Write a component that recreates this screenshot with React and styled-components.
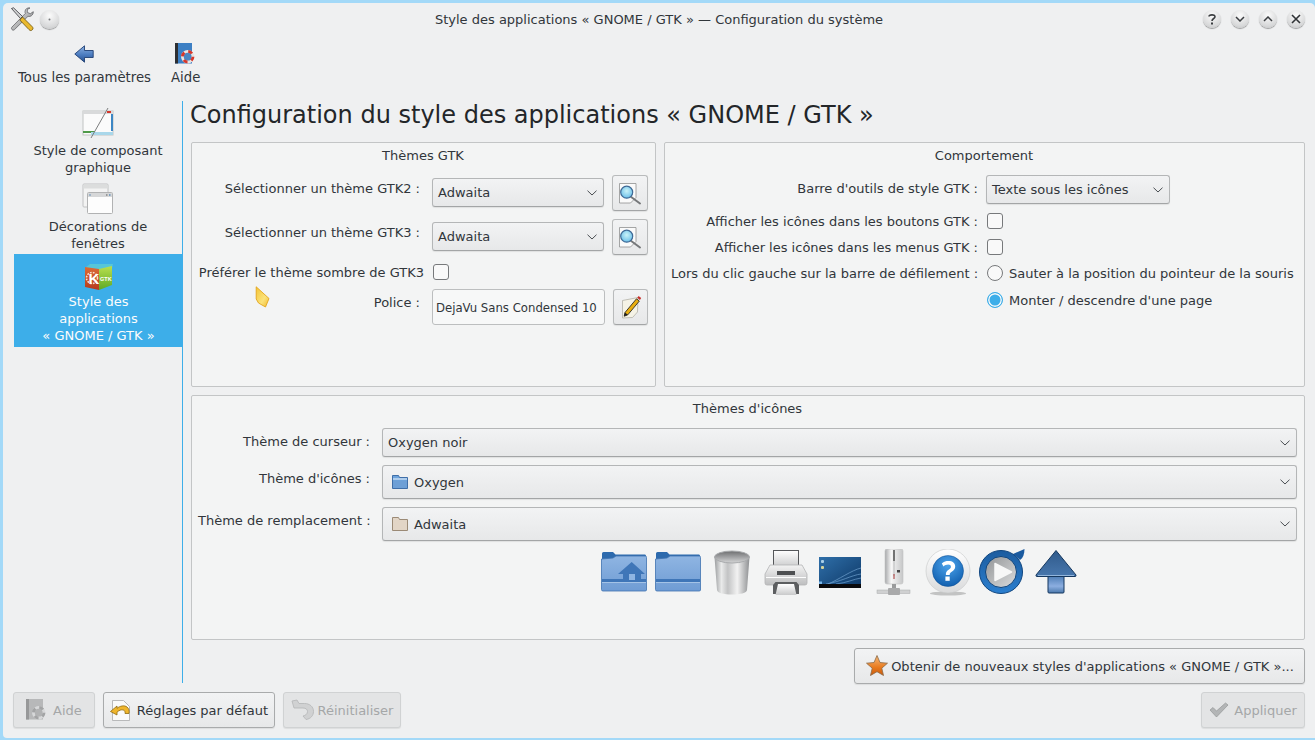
import React from 'react';
import styled, { createGlobalStyle } from 'styled-components';

const GlobalStyle = createGlobalStyle`
  html, body {
    margin: 0;
    padding: 0;
    background: #a3d9f8;
  }
  body {
    font-family: 'DejaVu Sans', 'Liberation Sans', sans-serif;
    font-size: 13px;
    color: #31363b;
  }
`;

const Screen = styled.div`
  width: 1315px;
  height: 740px;
  box-sizing: border-box;
  padding: 3px 0 2px 3px;
  overflow: hidden;
`;

const Window = styled.div`
  height: 735px;
  display: flex;
  flex-direction: column;
  background: #eff0f1;
  border-radius: 5px 5px 0 4px;
`;

const TitleBar = styled.div`
  height: 34px;
  box-sizing: border-box;
  flex: none;
  display: flex;
  align-items: center;
  padding: 0 10px 2px 7px;
`;

const TitleLeft = styled.div`
  display: flex;
  align-items: center;
  gap: 6px;
  width: 203px;
`;

const TitleText = styled.div`
  flex: 1;
  text-align: center;
`;

const TitleRight = styled.div`
  width: 200px;
  display: flex;
  justify-content: flex-end;
  gap: 10px;
`;

const RoundButton = styled.span`
  width: ${(p) => p.$size || 18}px;
  height: ${(p) => p.$size || 18}px;
  border-radius: 50%;
  display: flex;
  align-items: center;
  justify-content: center;
  background: radial-gradient(circle at 50% 30%, #fbfbfb, #d6d7d8 70%, #b4b5b6);
  box-shadow: 0 1px 1px rgba(0, 0, 0, 0.35);
`;

const Toolbar = styled.div`
  height: 64px;
  flex: none;
  display: flex;
  padding-left: 15px;
  gap: 20px;
  font-size: 13.25px;
`;

const ToolItem = styled.div`
  display: flex;
  flex-direction: column;
  align-items: center;
  padding-top: 4px;
  gap: 2px;
  line-height: 17px;
`;

const ToolIcon = styled.div`
  height: 26px;
  display: flex;
  align-items: center;
`;

const Main = styled.div`
  flex: 1;
  display: flex;
  padding-left: 11px;
  min-height: 0;
`;

const Sidebar = styled.div`
  width: 169px;
  height: 582px;
  box-sizing: border-box;
  border-right: 1px solid #3daee9;
  padding-top: 6px;
`;

const SideItem = styled.div`
  width: ${(p) => (p.$active ? '169px' : 'auto')};
  height: ${(p) => p.$h}px;
  box-sizing: border-box;
  padding: ${(p) => p.$top}px 16px 0;
  text-align: center;
  line-height: 17px;
  background: ${(p) => (p.$active ? '#3daee9' : 'transparent')};
  color: ${(p) => (p.$active ? '#fcfcfc' : '#31363b')};
`;

const SideIcon = styled.div`
  height: ${(p) => p.$h}px;
  display: flex;
  justify-content: center;
  align-items: flex-start;
`;

const Content = styled.div`
  flex: 1;
  padding: 0 10px 0 8px;
  display: flex;
  flex-direction: column;
`;

const PageTitle = styled.h1`
  margin: 0 0 0 -1px;
  height: 41px;
  flex: none;
  font-size: 24px;
  font-weight: 400;
  line-height: 28px;
  color: #232629;
`;

const GroupGrid = styled.div`
  display: grid;
  grid-template-columns: 465px 641px;
  grid-template-rows: 245px 245px;
  gap: 8px;
`;

const Group = styled.section`
  position: relative;
  grid-column: ${(p) => (p.$wide ? '1 / 3' : 'auto')};
  box-sizing: border-box;
  background: #f3f4f4;
  border: 1px solid #c3c5c6;
  border-radius: 2px;
  padding: 0 7px 0 6px;
`;

const GroupTitle = styled.div`
  height: 26px;
  line-height: 26px;
  text-align: center;
  margin-bottom: 6px;
`;

const Form = styled.div`
  display: grid;
  grid-template-columns: ${(p) => p.$label}px 1fr;
  column-gap: 8px;
  row-gap: 8px;
  align-items: start;
`;

const Label = styled.label`
  text-align: right;
  line-height: 17px;
  padding-top: ${(p) => (p.$flush ? 1 : 5)}px;
  padding-right: ${(p) => p.$pr || 0}px;
  white-space: nowrap;
`;

const FieldRow = styled.div`
  display: flex;
  align-items: center;
  gap: 8px;
  height: ${(p) => (p.$h ? `${p.$h}px` : 'auto')};
`;

const Combo = styled.div`
  flex: ${(p) => (p.$w ? 'none' : 1)};
  align-self: ${(p) => (p.$mt ? 'flex-start' : 'auto')};
  margin-top: ${(p) => p.$mt || 0}px;
  width: ${(p) => (p.$w ? `${p.$w}px` : 'auto')};
  height: ${(p) => p.$h || 29}px;
  box-sizing: border-box;
  display: flex;
  align-items: center;
  padding: 0 6px 0 5px;
  background: linear-gradient(#f2f3f4, #e7e8e9);
  border: 1px solid #b4b6b7;
  border-bottom-color: #a3a5a6;
  border-radius: 3px;
  box-shadow: 0 1px 1px rgba(0, 0, 0, 0.08);
`;

const ComboText = styled.span`
  flex: 1;
`;

const ComboIcon = styled.span`
  display: flex;
  margin: 0 6px 0 4px;
`;

const SquareButton = styled.div`
  width: ${(p) => p.$w || 36}px;
  height: 36px;
  flex: none;
  box-sizing: border-box;
  display: flex;
  align-items: center;
  justify-content: center;
  background: linear-gradient(#f2f3f4, #e7e8e9);
  border: 1px solid #b9bbbc;
  border-bottom-color: #a3a5a6;
  border-radius: 3px;
  box-shadow: 0 1px 1px rgba(0, 0, 0, 0.08);
`;

const FontField = styled.div`
  width: 173px;
  height: 36px;
  flex: none;
  box-sizing: border-box;
  display: flex;
  align-items: center;
  padding-left: 3px;
  background: #f7f8f8;
  border: 1px solid #bcbebf;
  border-radius: 3px;
  font-family: 'DejaVu Sans Condensed', 'DejaVu Sans', sans-serif;
  font-size: 13px;
  white-space: nowrap;
`;

const Check = styled.span`
  display: block;
  width: 16px;
  height: 16px;
  box-sizing: border-box;
  flex: none;
  margin-left: 1px;
  background: #f9f9f9;
  border: 1px solid #77797b;
  border-radius: 3px;
`;

const RadioList = styled.div`
  display: flex;
  flex-direction: column;
  gap: 9px;
`;

const RadioRow = styled.div`
  display: flex;
  align-items: center;
  height: 18px;
  gap: 6px;
  line-height: 17px;
`;

const Radio = styled.span`
  width: 16px;
  height: 16px;
  box-sizing: border-box;
  flex: none;
  margin-left: 1px;
  border-radius: 50%;
  background: ${(p) => (p.$checked ? '#3daee9' : '#f9f9f9')};
  border: 1px solid ${(p) => (p.$checked ? '#3daee9' : '#77797b')};
  box-shadow: ${(p) => (p.$checked ? 'inset 0 0 0 1.5px #f4f8fa' : 'none')};
`;

const PreviewRow = styled.div`
  grid-column: 2;
  display: flex;
  justify-content: center;
  gap: 6px;
`;

const PushButton = styled.div`
  height: 36px;
  width: ${(p) => p.$w}px;
  box-sizing: border-box;
  display: flex;
  align-items: center;
  justify-content: center;
  gap: ${(p) => p.$gap ?? 5}px;
  background: ${(p) => (p.$off ? '#e3e4e5' : 'linear-gradient(#f2f3f4, #e7e8e9)')};
  border: 1px solid ${(p) => (p.$off ? '#d0d2d3' : '#a9abac')};
  border-radius: 3px;
  color: ${(p) => (p.$off ? '#a5a7a8' : '#31363b')};
  box-shadow: 0 1px 1px rgba(0, 0, 0, 0.08);
  white-space: nowrap;
`;

const GetRow = styled.div`
  margin-top: 8px;
  display: flex;
  justify-content: flex-end;
`;

const Footer = styled.div`
  height: 36px;
  margin: 8px 10px 10px 10px;
  flex: none;
  display: flex;
  gap: 8px;
`;

const Spacer = styled.div`
  flex: 1;
`;

const Pointer = styled.svg`
  position: absolute;
  left: 63px;
  top: 143px;
`;

const Chevron = () => (
  <svg width="10" height="6" viewBox="0 0 10 6">
    <path d="M.5.7 5 5 9.500.7" fill="none" stroke="#4a4e52" strokeWidth="1" />
  </svg>
);

const ToolsIcon = () => (
  <svg width="24" height="25" viewBox="0 0 24 25">
    <defs>
      <linearGradient id="tm" x1="0" y1="0" x2="1" y2="1">
        <stop offset="0" stopColor="#f2f2f2" />
        <stop offset="1" stopColor="#7c7e80" />
      </linearGradient>
    </defs>
    <path d="M20 1c-2.500-.6-5 1-5 3.600 0 .8.1 1.300.4 1.800L2 20c-.8.9-.7 1.900 0 2.600.8.800 1.800.7 2.500 0L18 9.300c2.400.8 5.400-1.200 5.300-4.600l-3 2-3-1.300.1-3z" fill="url(#tm)" stroke="#54565a" strokeWidth=".7" />
    <path d="M1.500 1.500 3.500.8l9 8.700-2 2z" fill="#d4d5d6" stroke="#33353a" strokeWidth=".8" />
    <path d="M12.500 10 22 19.500c1.300 1.300 1.300 2.300.3 3.300-1.100 1.100-2.100 1-3.300-.2L9.800 13z" fill="#e9b92e" stroke="#6b5108" strokeWidth=".8" />
  </svg>
);

const BackArrow = () => (
  <svg width="20" height="18" viewBox="0 0 20 18">
    <defs>
      <linearGradient id="ba" x1="0" y1="0" x2="0" y2="1">
        <stop offset="0" stopColor="#8cb0e0" />
        <stop offset=".55" stopColor="#4b7cc0" />
        <stop offset="1" stopColor="#274f8e" />
      </linearGradient>
    </defs>
    <path d="M.8 9 10.500.8v4.700h8.700v7h-8.700v4.700z" fill="url(#ba)" stroke="#1f3f74" strokeWidth=".9" strokeLinejoin="round" />
  </svg>
);

const HelpBook = ({ off }) => (
  <svg width="22" height="22" viewBox="0 0 22 22" opacity={off ? 0.85 : 1}>
    <rect x="0" y="0" width="17" height="20.500" fill={off ? '#b0b1b2' : '#3c7fc4'} />
    <rect x="0" y="0" width="3" height="20.500" fill={off ? '#8a8b8c' : '#2d2f33'} />
    <circle cx="12.700" cy="13.700" r="5.300" fill={off ? '#a9aaab' : '#4a86c3'} stroke={off ? '#d6d7d8' : '#e9e4e2'} strokeWidth="2.800" />
    <circle cx="12.700" cy="13.700" r="5.300" fill="none" stroke={off ? '#98999a' : '#d6372b'} strokeWidth="2.800" strokeDasharray="4.200 4.100" />
  </svg>
);

const WidgetStyleIcon = () => (
  <svg width="32" height="32" viewBox="0 0 32 32">
    <rect x="1" y="4" width="30" height="24" fill="#fbfbfb" stroke="#c2c3c4" />
    <rect x="1" y="4" width="30" height="3" fill="#d9dadb" />
    <rect x="25" y="4" width="4" height="2" fill="#d6372b" />
    <rect x="29" y="7" width="2" height="17" fill="#3c86c4" />
    <rect x="1" y="24" width="12" height="2" fill="#4f9a4a" />
    <rect x="9" y="25" width="22" height="3" fill="#a9d7ea" />
    <path d="M9 31 26 1" stroke="#7b7d7e" strokeWidth="1" />
  </svg>
);

const WindowDecoIcon = () => (
  <svg width="32" height="32" viewBox="0 0 32 32">
    <rect x="1" y="1" width="25" height="23" rx="1" fill="#f3f3f3" stroke="#c0c1c2" />
    <rect x="1.500" y="1.500" width="24" height="4" fill="#dcdddd" />
    <rect x="5.500" y="9.500" width="25" height="21" rx="1" fill="#fdfdfd" stroke="#b1b2b3" />
    <rect x="6" y="10" width="24" height="4" fill="#d6d7d8" />
    <rect x="7" y="11" width="2" height="2" fill="#9fb4c8" />
    <rect x="24" y="11" width="1.500" height="2" fill="#999" />
    <rect x="27" y="11" width="1.500" height="2" fill="#7a9fc0" />
  </svg>
);

const CubeIcon = () => (
  <svg width="30" height="28" viewBox="0 0 30 28">
    <defs>
      <linearGradient id="cg" x1="0" y1="0" x2="0" y2="1">
        <stop offset="0" stopColor="#b9e04f" />
        <stop offset="1" stopColor="#5ea925" />
      </linearGradient>
      <linearGradient id="cr" x1="0" y1="0" x2="0" y2="1">
        <stop offset="0" stopColor="#dd6a35" />
        <stop offset="1" stopColor="#b53a1e" />
      </linearGradient>
    </defs>
    <path d="M1 5 6 1h23l-1 4-13 2z" fill="#56c6d8" />
    <path d="M1 4 15 6v21L1 24z" fill="url(#cr)" />
    <path d="M15 6 28 3v19l-13 5z" fill="url(#cg)" />
    <circle cx="8" cy="15" r="5.500" fill="none" stroke="#f6e0cc" strokeWidth="1.600" strokeDasharray="1.700 1.200" />
    <text x="4.500" y="21" fontSize="15" fontWeight="700" fill="#fff" fontFamily="Liberation Sans">K</text>
    <text x="16" y="18" fontSize="5.500" fontWeight="700" fill="#fff" fontFamily="Liberation Sans">GTK</text>
  </svg>
);

const MagnifierIcon = ({ id }) => (
  <svg width="24" height="24" viewBox="0 0 24 24">
    <defs>
      <radialGradient id={id} cx=".5" cy=".4" r=".6">
        <stop offset="0" stopColor="#c9f2f8" />
        <stop offset="1" stopColor="#6bbfe9" />
      </radialGradient>
    </defs>
    <path d="M1.500 2.500h16.500v14l-5.500 5.500h-11z" fill="#fafafa" stroke="#8f9091" strokeWidth=".8" />
    <path d="M12.500 15.500 22 22.500" stroke="#76787a" strokeWidth="2" strokeLinecap="round" />
    <circle cx="8.700" cy="11.200" r="6" fill={`url(#${id})`} stroke="#3f6a96" strokeWidth="1.200" />
  </svg>
);

const PencilIcon = () => (
  <svg width="22" height="26" viewBox="0 0 22 26">
    <path d="M2.500 6.500 18 3.500l-.5 14.500-5 5.500-10 .5z" fill="#f5f3e6" stroke="#b2b1a7" strokeWidth=".8" />
    <path d="M5 18.500 16.500 4.800l2.800 2.300L7.800 20.800l-3.600 1.400z" fill="#e8ae10" stroke="#2e2c23" strokeWidth=".9" />
    <path d="M17.300 3.800 18.600 2l2.600 2-1.300 2z" fill="#c8302a" />
    <path d="M4 22.300 5 18.500 7.800 20.800z" fill="#222" />
  </svg>
);

const SmallFolder = ({ tan }) => (
  <svg width="16" height="16" viewBox="0 0 16 16">
    <path d="M.5 1.500h6l1 2h8v11H.5z" fill={tan ? '#e2d5c6' : '#6da3dc'} stroke={tan ? '#9b8a76' : '#3f6ea8'} strokeLinejoin="round" />
    {!tan && <path d="M1 6.500h14v7.500H1z" fill="#6d9fd6" />}
    {!tan && <path d="M1 5h14" stroke="#f0f6fc" strokeWidth="1" />}
  </svg>
);

const FolderBody = ({ id, children }) => (
  <svg width="48" height="48" viewBox="0 0 48 48">
    <defs>
      <linearGradient id={id} x1="0" y1="0" x2="0" y2="1">
        <stop offset="0" stopColor="#8fb5e2" />
        <stop offset="1" stopColor="#6f9cd4" />
      </linearGradient>
    </defs>
    <path d="M2 4.500Q2 3 3.500 3H13l2.500 2.500H45q1 0 1 1.500v4H2z" fill="#2d6aad" />
    <path d="M1.500 10 13 9l3-2h29.500q1 0 1 1.500V41q0 1-1.500 1H3q-1.500 0-1.500-1.500z" fill={`url(#${id})`} stroke="#3f72b0" strokeWidth=".8" />
    <rect x="2" y="30" width="44" height="3" fill="#3f76b8" />
    <rect x="2" y="33" width="44" height="1" fill="#a4c3e6" />
    {children}
  </svg>
);

const TrashIcon = () => (
  <svg width="48" height="48" viewBox="0 0 48 48">
    <defs>
      <linearGradient id="tb" x1="0" y1="0" x2="1" y2="0">
        <stop offset="0" stopColor="#9b9d9f" />
        <stop offset=".2" stopColor="#e9eaea" />
        <stop offset=".38" stopColor="#c2c3c4" />
        <stop offset=".65" stopColor="#f2f2f2" />
        <stop offset="1" stopColor="#8e9092" />
      </linearGradient>
      <linearGradient id="ti" x1="0" y1="0" x2="0" y2="1">
        <stop offset="0" stopColor="#6d6e70" />
        <stop offset="1" stopColor="#d5d6d7" />
      </linearGradient>
    </defs>
    <path d="M6.500 8 9 41c.2 3 7 4.500 15 4.500S38.800 44 39 41l2.500-33z" fill="url(#tb)" />
    <ellipse cx="24" cy="8" rx="17.500" ry="6" fill="url(#ti)" stroke="#a8aaac" />
  </svg>
);

const PrinterIcon = () => (
  <svg width="48" height="48" viewBox="0 0 48 48">
    <defs>
      <linearGradient id="pb" x1="0" y1="0" x2="0" y2="1">
        <stop offset="0" stopColor="#f3f3f3" />
        <stop offset="1" stopColor="#bdbebf" />
      </linearGradient>
      <linearGradient id="pp" x1="0" y1="0" x2="0" y2="1">
        <stop offset="0" stopColor="#ffffff" />
        <stop offset="1" stopColor="#c9cacb" />
      </linearGradient>
    </defs>
    <rect x="11.500" y="1.500" width="25" height="17" fill="url(#pp)" stroke="#55575a" />
    <path d="M3 25 8 16h32l5 9v9q0 2-2 2H5q-2 0-2-2z" fill="url(#pb)" stroke="#b3b4b5" strokeWidth=".8" />
    <rect x="15" y="22" width="18" height="4" fill="#4e5052" />
    <rect x="4" y="28" width="40" height="1" fill="#fdfdfd" />
    <path d="M11 36 13.500 33h21l2.500 3v9H11z" fill="#5c5e60" />
    <path d="M13.500 46 16 35h16l2.500 11z" fill="url(#pp)" />
  </svg>
);

const ScreenIcon = () => (
  <svg width="48" height="48" viewBox="0 0 48 48">
    <defs>
      <linearGradient id="sb" x1="0" y1="0" x2="1" y2="1">
        <stop offset="0" stopColor="#2f6fa9" />
        <stop offset="1" stopColor="#0d3765" />
      </linearGradient>
    </defs>
    <rect x="3" y="8" width="42" height="31" fill="url(#sb)" />
    <path d="M12 35C22 31 36 21 45 19M10 35C24 33 36 26 45 25M20 35c10-1 18-5 25-6" stroke="#6ea0cf" strokeWidth=".7" fill="none" />
    <rect x="3" y="35" width="42" height="4" fill="#0a0a0c" />
    <rect x="5" y="11" width="3" height="3" rx="1" fill="#a9cfe9" />
    <rect x="5" y="17" width="3" height="3" rx="1" fill="#d7d59b" />
    <rect x="3" y="32.500" width="3" height="2.500" fill="#7ab7ea" />
  </svg>
);

const ServerIcon = () => (
  <svg width="48" height="48" viewBox="0 0 48 48">
    <defs>
      <linearGradient id="sv" x1="0" y1="0" x2="1" y2="0">
        <stop offset="0" stopColor="#a7a9ab" />
        <stop offset=".35" stopColor="#f7f7f7" />
        <stop offset="1" stopColor="#c5c6c7" />
      </linearGradient>
    </defs>
    <rect x="15" y="0" width="18" height="35" rx="2" fill="url(#sv)" stroke="#c3c4c5" strokeWidth=".6" />
    <path d="M24 1v11" stroke="#222" strokeWidth="1.200" />
    <path d="M24 12v15" stroke="#b8b9ba" strokeWidth="1" />
    <path d="M24 25v5" stroke="#a83434" strokeWidth="1" />
    <rect x="27" y="21" width="3" height="2.500" fill="#444" />
    <rect x="22" y="35" width="4" height="5" fill="#9a9b9c" />
    <rect x="7" y="41" width="33" height="3.500" fill="#cfd0d1" stroke="#a9aaab" strokeWidth=".5" />
    <rect x="18" y="39" width="12" height="7" rx="1" fill="#a9aaab" />
  </svg>
);

const HelpRoundIcon = () => (
  <svg width="48" height="48" viewBox="0 0 48 48">
    <defs>
      <radialGradient id="hr" cx=".5" cy=".3" r=".75">
        <stop offset="0" stopColor="#4da4ec" />
        <stop offset="1" stopColor="#0d5bab" />
      </radialGradient>
      <linearGradient id="hb" x1="0" y1="0" x2="0" y2="1">
        <stop offset="0" stopColor="#ffffff" />
        <stop offset="1" stopColor="#d9dadb" />
      </linearGradient>
    </defs>
    <ellipse cx="24" cy="44.500" rx="18" ry="2" fill="#000" opacity=".2" />
    <circle cx="24" cy="22" r="22" fill="url(#hb)" stroke="#c6c7c8" strokeWidth=".6" />
    <circle cx="24" cy="22" r="15.500" fill="url(#hr)" stroke="#0e4f92" strokeWidth=".5" />
    <path d="M17.800 14.500C20 12.500 22 12 24.500 12c4 0 6.700 2 6.700 5.500 0 2.600-1.500 4-3.500 5.200-1.600 1-2 1.700-2 3.300h-3.800c-.2-2.600.6-4 2.700-5.300 1.600-1 2.300-1.700 2.300-3 0-1.400-1-2.200-2.700-2.200-1.800 0-3.300.7-4.700 1.900z" fill="#fff" />
    <rect x="21.400" y="27.500" width="4.300" height="4.300" fill="#fff" />
  </svg>
);

const PlayerIcon = () => (
  <svg width="48" height="48" viewBox="0 0 48 48">
    <defs>
      <linearGradient id="pl" x1="0" y1="0" x2="1" y2="1">
        <stop offset="0" stopColor="#929496" />
        <stop offset="1" stopColor="#dcddde" />
      </linearGradient>
      <linearGradient id="pr" x1="0" y1="0" x2="0" y2="1">
        <stop offset="0" stopColor="#1c5c9f" />
        <stop offset="1" stopColor="#2b7fcf" />
      </linearGradient>
    </defs>
    <path d="M35 5 46.500 0c0 5-1.500 9-4.500 11z" fill="#1a5a9f" />
    <circle cx="23" cy="23" r="21.500" fill="url(#pr)" stroke="#0f457f" strokeWidth="1" />
    <circle cx="23" cy="23" r="15.500" fill="url(#pl)" stroke="#0e457f" strokeWidth="1" />
    <path d="M17 14.500 33.500 23 17 31.500z" fill="#f7f7f7" strokeLinejoin="round" stroke="#f7f7f7" strokeWidth="1.500" />
  </svg>
);

const UpArrowIcon = () => (
  <svg width="48" height="48" viewBox="0 0 48 48">
    <defs>
      <linearGradient id="ua" x1="0" y1="0" x2="0" y2="1">
        <stop offset="0" stopColor="#2f5a8b" />
        <stop offset="1" stopColor="#4877ad" />
      </linearGradient>
      <linearGradient id="ub" x1="0" y1="0" x2="0" y2="1">
        <stop offset="0" stopColor="#4d7db5" />
        <stop offset=".6" stopColor="#8caee0" />
        <stop offset="1" stopColor="#4a78ab" />
      </linearGradient>
    </defs>
    <path d="M16 27h16v16q0 1-1 1H17q-1 0-1-1z" fill="url(#ub)" stroke="#15375e" />
    <path d="M24 1.500 44 26q.3 1.500-1 1.500H5q-1.300 0-1-1.500z" fill="url(#ua)" stroke="#15375e" strokeLinejoin="round" />
    <path d="M6 26.500h36" stroke="#a7c7e9" strokeWidth=".8" />
  </svg>
);

const StarIcon = () => (
  <svg width="24" height="24" viewBox="0 0 24 24">
    <defs>
      <linearGradient id="st" x1="0" y1="0" x2="0" y2="1">
        <stop offset="0" stopColor="#f6ba7a" />
        <stop offset=".6" stopColor="#e87a1e" />
        <stop offset="1" stopColor="#c8590d" />
      </linearGradient>
    </defs>
    <path d="M12 1.500 15 8.500l7.500.7-5.700 5 1.700 7.300L12 17.700 5.500 21.500l1.700-7.300-5.700-5L9 8.500z" fill="url(#st)" stroke="#8a6a46" strokeWidth=".8" strokeLinejoin="round" />
  </svg>
);

const DefaultsIcon = () => (
  <svg width="22" height="24" viewBox="0 0 22 24">
    <path d="M2.500 2.500h11l6 6v14h-17z" fill="#fafafa" stroke="#a9aaab" strokeWidth=".8" />
    <path d="M.5 13.500 7 8v2.300c3-2.500 7.500-3.300 10-1.300 2 1.500 2.500 4 2 6.500h-4c.3-1.700-.3-3-1.700-3.500-1.800-.6-4.300.3-6.300 2.200V17z" fill="#efb52c" stroke="#8f6b10" strokeWidth=".8" strokeLinejoin="round" />
  </svg>
);

const ResetIcon = () => (
  <svg width="24" height="22" viewBox="0 0 24 22">
    <path d="M1 2 3 9h9c3 0 4.500 1.500 4.500 3.500 0 2.500-2 4-4.500 4.500l3 3.500c4.500-.5 7.500-4 7.500-8 0-5-4-8-9-8H8L6 1z" fill="#d0d1d2" stroke="#b4b5b6" strokeWidth=".8" strokeLinejoin="round" />
  </svg>
);

const CheckMarkIcon = () => (
  <svg width="20" height="16" viewBox="0 0 20 16">
    <path d="M1 8 4 5.500 7.500 9 16.500 1 19 3 7.500 15z" fill="#b3b5b6" stroke="#949697" strokeWidth=".7" strokeLinejoin="round" />
  </svg>
);

export default function App() {
  return (
    <>
      <GlobalStyle />
      <Screen>
        <Window>
          <TitleBar>
            <TitleLeft>
              <ToolsIcon />
              <RoundButton $size={19}>
                <svg width="3" height="3"><circle cx="1.500" cy="1.500" r="1" fill="#77797b" /></svg>
              </RoundButton>
            </TitleLeft>
            <TitleText>Style des applications « GNOME / GTK » — Configuration du système</TitleText>
            <TitleRight>
              <RoundButton>
                <svg width="10" height="12" viewBox="0 0 10 12">
                  <path d="M2 3.500C2 1.500 8 1 8 3.800 8 5.600 5 5.500 5 8" fill="none" stroke="#3a3d40" strokeWidth="1.600" />
                  <rect x="4" y="9.500" width="2" height="2" fill="#3a3d40" />
                </svg>
              </RoundButton>
              <RoundButton>
                <svg width="10" height="6" viewBox="0 0 10 6"><path d="M1 1 5 5 9 1" fill="none" stroke="#3a3d40" strokeWidth="1.500" /></svg>
              </RoundButton>
              <RoundButton>
                <svg width="10" height="6" viewBox="0 0 10 6"><path d="M1 5 5 1 9 5" fill="none" stroke="#3a3d40" strokeWidth="1.500" /></svg>
              </RoundButton>
              <RoundButton>
                <svg width="10" height="10" viewBox="0 0 10 10"><path d="M1 1 9 9M9 1 1 9" fill="none" stroke="#2f3235" strokeWidth="1.600" /></svg>
              </RoundButton>
            </TitleRight>
          </TitleBar>

          <Toolbar>
            <ToolItem>
              <ToolIcon><BackArrow /></ToolIcon>
              <span>Tous les paramètres</span>
            </ToolItem>
            <ToolItem>
              <ToolIcon><HelpBook /></ToolIcon>
              <span>Aide</span>
            </ToolItem>
          </Toolbar>

          <Main>
            <Sidebar>
              <SideItem $h={76} $top={0}>
                <SideIcon $h={35}><WidgetStyleIcon /></SideIcon>
                Style de composant graphique
              </SideItem>
              <SideItem $h={71} $top={0}>
                <SideIcon $h={35}><WindowDecoIcon /></SideIcon>
                Décorations de fenêtres
              </SideItem>
              <SideItem $active $h={93} $top={9}>
                <SideIcon $h={30}><CubeIcon /></SideIcon>
                Style des applications<br />« GNOME / GTK »
              </SideItem>
            </Sidebar>

            <Content>
              <PageTitle>Configuration du style des applications « GNOME / GTK »</PageTitle>
              <GroupGrid>
                <Group>
                  <GroupTitle>Thèmes GTK</GroupTitle>
                  <Form $label={226}>
                    <Label $pr={4}>Sélectionner un thème GTK2 :</Label>
                    <FieldRow>
                      <Combo $mt={3}><ComboText>Adwaita</ComboText><Chevron /></Combo>
                      <SquareButton><MagnifierIcon id="m1" /></SquareButton>
                    </FieldRow>
                    <Label $pr={4}>Sélectionner un thème GTK3 :</Label>
                    <FieldRow>
                      <Combo $mt={3}><ComboText>Adwaita</ComboText><Chevron /></Combo>
                      <SquareButton><MagnifierIcon id="m2" /></SquareButton>
                    </FieldRow>
                    <Label $flush>Préférer le thème sombre de GTK3</Label>
                    <FieldRow $h={18}><Check /></FieldRow>
                    <Label $pr={4}>Police :</Label>
                    <FieldRow>
                      <FontField>DejaVu Sans Condensed 10</FontField>
                      <SquareButton $w={35}><PencilIcon /></SquareButton>
                    </FieldRow>
                  </Form>
                  <Pointer width="16" height="23" viewBox="0 0 16 23">
                    <defs>
                      <linearGradient id="cur" x1="0" y1="0" x2="1" y2="1">
                        <stop offset="0" stopColor="#f4c534" />
                        <stop offset=".6" stopColor="#fbe27a" />
                        <stop offset="1" stopColor="#f0b92c" />
                      </linearGradient>
                    </defs>
                    <path d="M1.200.8 14 12.500 10.500 21l-7-4L1.200 13z" fill="url(#cur)" stroke="#e3a51c" strokeWidth=".9" strokeLinejoin="round" />
                  </Pointer>
                </Group>

                <Group>
                  <GroupTitle>Comportement</GroupTitle>
                  <Form $label={307}>
                    <Label>Barre d'outils de style GTK :</Label>
                    <Combo $w={184}><ComboText>Texte sous les icônes</ComboText><Chevron /></Combo>
                    <Label $flush>Afficher les icônes dans les boutons GTK :</Label>
                    <FieldRow $h={18}><Check /></FieldRow>
                    <Label $flush>Afficher les icônes dans les menus GTK :</Label>
                    <FieldRow $h={18}><Check /></FieldRow>
                    <Label $flush>Lors du clic gauche sur la barre de défilement :</Label>
                    <RadioList>
                      <RadioRow><Radio />Sauter à la position du pointeur de la souris</RadioRow>
                      <RadioRow><Radio $checked />Monter / descendre d'une page</RadioRow>
                    </RadioList>
                  </Form>
                </Group>

                <Group $wide>
                  <GroupTitle>Thèmes d'icônes</GroupTitle>
                  <Form $label={176}>
                    <Label $pr={4}>Thème de curseur :</Label>
                    <Combo><ComboText>Oxygen noir</ComboText><Chevron /></Combo>
                    <Label $pr={4}>Thème d'icônes :</Label>
                    <Combo $h={34}><ComboIcon><SmallFolder /></ComboIcon><ComboText>Oxygen</ComboText><Chevron /></Combo>
                    <Label $pr={4}>Thème de remplacement :</Label>
                    <Combo $h={34}><ComboIcon><SmallFolder tan /></ComboIcon><ComboText>Adwaita</ComboText><Chevron /></Combo>
                    <PreviewRow>
                      <FolderBody id="f1">
                        <path d="M31.700 13 45 25h-4v6H23v-6h-5z" fill="#3f76b8" />
                        <rect x="29" y="25" width="6" height="6" fill="#8fb5e2" />
                      </FolderBody>
                      <FolderBody id="f2" />
                      <TrashIcon />
                      <PrinterIcon />
                      <ScreenIcon />
                      <ServerIcon />
                      <HelpRoundIcon />
                      <PlayerIcon />
                      <UpArrowIcon />
                    </PreviewRow>
                  </Form>
                </Group>
              </GroupGrid>
              <GetRow>
                <PushButton $w={451} $gap={2}>
                  <StarIcon />
                  Obtenir de nouveaux styles d'applications « GNOME / GTK »...
                </PushButton>
              </GetRow>
            </Content>
          </Main>

          <Footer>
            <PushButton $off $w={82}><HelpBook off />Aide</PushButton>
            <PushButton $w={172}><DefaultsIcon />Réglages par défaut</PushButton>
            <PushButton $off $w={118} $gap={3}><ResetIcon />Réinitialiser</PushButton>
            <Spacer />
            <PushButton $off $w={104}><CheckMarkIcon />Appliquer</PushButton>
          </Footer>
        </Window>
      </Screen>
    </>
  );
}
